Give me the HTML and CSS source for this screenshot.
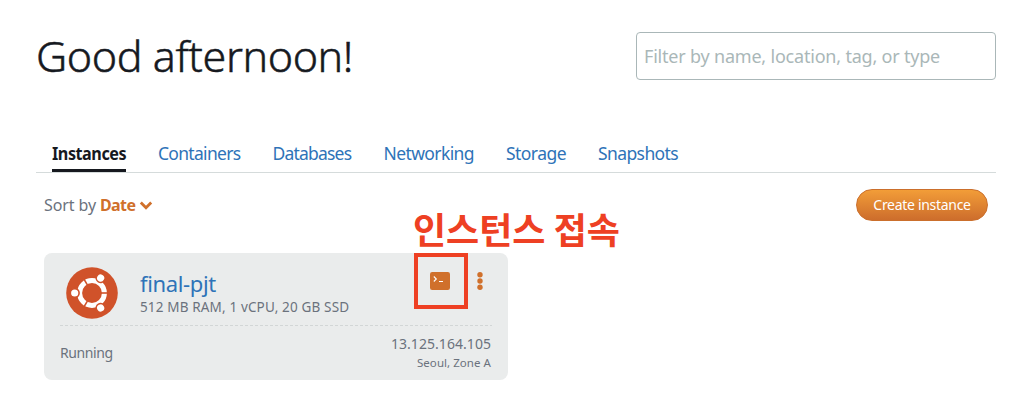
FILE: index.html
```html
<!DOCTYPE html>
<html lang="en">
<head>
<meta charset="utf-8">
<title>Instances</title>
<link rel="stylesheet" href="styles.css">
</head>
<body>
<main class="page">
  <header class="header">
    <h1 class="title">Good afternoon!</h1>
    <input class="filter" type="text" placeholder="Filter by name, location, tag, or type">
  </header>
  <nav class="tabs">
    <a class="tab active"><span>Instances</span></a>
    <a class="tab containers"><span>Containers</span></a>
    <a class="tab databases"><span>Databases</span></a>
    <a class="tab networking"><span>Networking</span></a>
    <a class="tab storage"><span>Storage</span></a>
    <a class="tab snapshots"><span>Snapshots</span></a>
  </nav>
  <div class="toolbar">
    <div class="sort"><span class="sort-label">Sort by</span><span class="sort-value">Date</span>
      <svg class="chevron" width="14" height="10" viewBox="0 0 14 10"><path d="M1.8 2.6 7 7.8 12.2 2.6" fill="none" stroke="#d0702b" stroke-width="2.8"/></svg>
    </div>
    <button class="create">Create instance</button>
  </div>
  <section class="card">
    <div class="card-top">
      <svg class="logo" width="52" height="52" viewBox="-26 -26 52 52">
        <circle r="25.8" fill="#d0522a"/>
        <circle r="12.4" fill="none" stroke="#fff" stroke-width="5"/>
        <g stroke="#d0522a" stroke-width="1.6"><path d="M9 0H17"/><path d="M9 0H17" transform="rotate(120)"/><path d="M9 0H17" transform="rotate(240)"/></g>
        <g fill="#fff" stroke="#d0522a" stroke-width="1.6"><circle cx="-17.3" r="4.4"/><circle cx="-17.3" r="4.4" transform="rotate(120)"/><circle cx="-17.3" r="4.4" transform="rotate(240)"/></g>
      </svg>
      <div class="info">
        <a class="name">final-pjt</a>
        <div class="specs">512 MB RAM, 1 vCPU, 20 GB SSD</div>
      </div>
      <div class="actions">
        <div class="highlight">
          <svg width="20" height="18" viewBox="0 0 20 18"><rect width="20" height="18" rx="2.2" fill="#d0702b"/><path d="M3.8 4.5 6.3 7 3.8 9.5M9 9.5h4" fill="none" stroke="#fff" stroke-width="1.1"/></svg>
          <div class="note">인스턴스 접속</div>
        </div>
        <svg class="dots" width="6" height="18" viewBox="0 0 6 18" fill="#d0702b"><circle cx="3" cy="2.8" r="2.7"/><circle cx="3" cy="9" r="2.7"/><circle cx="3" cy="15.2" r="2.7"/></svg>
      </div>
    </div>
    <svg class="divider" width="432" height="1"><path d="M0 .5H432" stroke="#d2d6d6" stroke-dasharray="3 2"/></svg>
    <div class="card-bottom">
      <div class="status">Running</div>
      <div class="where">
        <div class="ip">13.125.164.105</div>
        <div class="zone">Seoul, Zone A</div>
      </div>
    </div>
  </section>
</main>
</body>
</html>
```
FILE: styles.css
```css
* { box-sizing: border-box; }
body { margin: 0; background: #fff; color: #6b727d; font-family: "Noto Sans", "Noto Sans CJK KR", sans-serif; }
.page { width: 1024px; height: 408px; padding: 32px 28px 0 36px; }
.header { display: flex; justify-content: space-between; height: 48px; }
.title { margin: 0; font-size: 43px; font-weight: 300; line-height: 48px; color: #16191f; white-space: nowrap; letter-spacing: -0.4px; -webkit-text-stroke: 0.5px #16191f; }
.filter { width: 360px; height: 48px; padding: 0 7px; border: 1px solid #aab7b8; border-radius: 4px; background: #fff; font: 18px "Noto Sans", sans-serif; letter-spacing: -0.2px; }
.filter::placeholder { color: #aab7b8; opacity: 1; }
.tabs { display: flex; gap: 32px; height: 61px; margin-top: 32px; padding: 28px 16px 0; border-bottom: 1px solid #d5dbdb; }
.tab { height: 32px; font-size: 17.5px; line-height: 27px; color: #2e73b8; letter-spacing: -0.5px; white-space: nowrap; }
.tab span { display: inline-block; transform-origin: left; }
.tab.active { width: 74px; color: #16191f; font-weight: 700; border-bottom: 3px solid #16191f; }
.tab.active span { transform: scaleX(0.925); }
.containers { width: 82.5px; letter-spacing: -0.7px; }
.databases { width: 79px; letter-spacing: -0.8px; }
.networking { width: 90.5px; letter-spacing: -0.6px; }
.storage { width: 60px; letter-spacing: -0.55px; }
.snapshots { width: 80px; letter-spacing: -0.6px; }
.toolbar { display: flex; justify-content: space-between; align-items: center; height: 32px; margin-top: 16px; padding: 0 8px; }
.sort { display: flex; align-items: center; font-size: 16px; letter-spacing: -0.1px; white-space: nowrap; }
.sort-value { margin-left: 4px; color: #d0702b; font-weight: 700; letter-spacing: -0.6px; }
.chevron { margin-left: 4px; }
.create { width: 132px; height: 32px; padding: 0; border: 1px solid #cb6f2c; border-radius: 16px; background: linear-gradient(#f29d38, #cd6d2c); color: #fff; font: 14px/28px "Noto Sans", sans-serif; letter-spacing: -0.3px; white-space: nowrap; }
.card { width: 464px; height: 127px; margin: 32px 0 0 8px; padding: 0 16px; border-radius: 8px; background: #eaecec; }
.card-top { display: flex; height: 72px; }
.logo { margin: 14px 0 0 6px; flex: none; }
.info { margin-left: 22px; padding-top: 15px; white-space: nowrap; }
.name { display: block; font-size: 22px; line-height: 30px; color: #2e73b8; letter-spacing: -0.35px; }
.specs { font-size: 13.5px; line-height: 18px; letter-spacing: 0.15px; }
.actions { display: flex; margin-left: auto; }
.highlight { position: relative; width: 54px; height: 56px; padding: 15px 12px; border: 4px solid #ee4023; }
.highlight svg { display: block; }
.note { position: absolute; left: -5px; top: -54px; font: 700 36px/50px "Noto Sans CJK KR", sans-serif; color: #ee4023; white-space: nowrap; }
.dots { margin: 19px 9px 0; }
.divider { display: block; }
.card-bottom { display: flex; justify-content: space-between; height: 54px; }
.status { padding-top: 17px; font-size: 14px; line-height: 20px; letter-spacing: -0.4px; }
.where { padding: 8px 1px 0 0; text-align: right; }
.ip { font-size: 14px; line-height: 20px; letter-spacing: 0.05px; }
.zone { font-size: 11.5px; line-height: 18px; letter-spacing: 0.05px; }
```
